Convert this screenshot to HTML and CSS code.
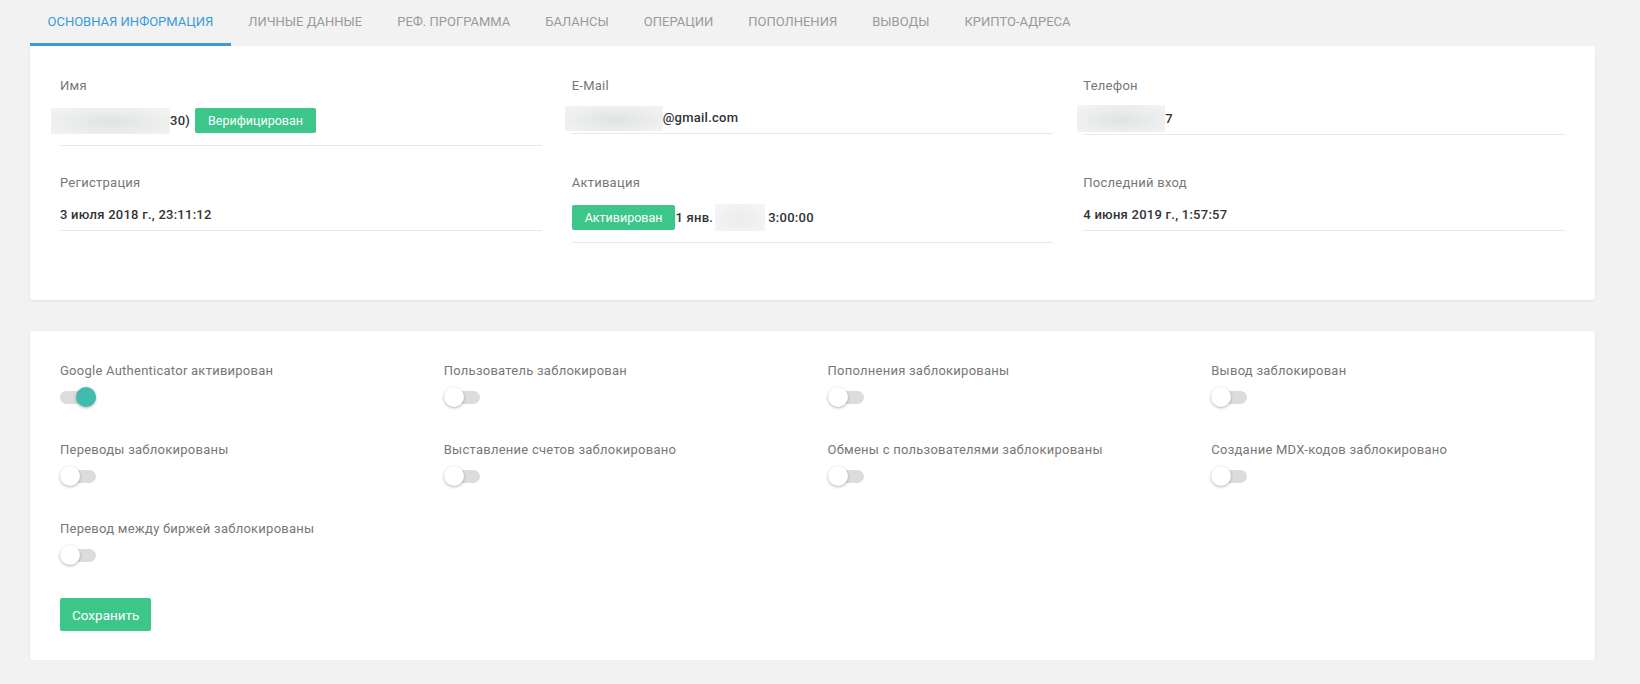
FILE: index.html
```
<!DOCTYPE html>
<html lang="ru">
<head>
<meta charset="utf-8">
<title>Пользователь</title>
<link rel="stylesheet" href="styles.css">
</head>
<body>
<nav class="tabs">
  <a class="tab tab--active">ОСНОВНАЯ ИНФОРМАЦИЯ</a>
  <a class="tab">ЛИЧНЫЕ ДАННЫЕ</a>
  <a class="tab">РЕФ. ПРОГРАММА</a>
  <a class="tab">БАЛАНСЫ</a>
  <a class="tab">ОПЕРАЦИИ</a>
  <a class="tab">ПОПОЛНЕНИЯ</a>
  <a class="tab">ВЫВОДЫ</a>
  <a class="tab">КРИПТО-АДРЕСА</a>
</nav>
<main class="page">
  <section class="card card--info">
    <div class="info-grid">
      <div class="field">
        <div class="field__label">Имя</div>
        <div class="field__value field__value--badge">
          <span class="blur blur--name"></span><span>30)</span><span class="badge badge--gap">Верифицирован</span>
        </div>
      </div>
      <div class="field">
        <div class="field__label">E-Mail</div>
        <div class="field__value">
          <span class="blur blur--mail"></span><span>@gmail.com</span>
        </div>
      </div>
      <div class="field">
        <div class="field__label">Телефон</div>
        <div class="field__value">
          <span class="blur blur--phone"></span><span>7</span>
        </div>
      </div>
      <div class="field">
        <div class="field__label">Регистрация</div>
        <div class="field__value"><span>3 июля 2018 г., 23:11:12</span></div>
      </div>
      <div class="field">
        <div class="field__label">Активация</div>
        <div class="field__value field__value--badge">
          <span class="badge">Активирован</span><span>1 янв.</span><span class="blur blur--year"></span><span>3:00:00</span>
        </div>
      </div>
      <div class="field">
        <div class="field__label">Последний вход</div>
        <div class="field__value"><span>4 июня 2019 г., 1:57:57</span></div>
      </div>
    </div>
  </section>

  <section class="card card--flags">
    <div class="flags-grid">
      <div class="flag">
        <div class="flag__label">Google Authenticator активирован</div>
        <span class="switch switch--on"><span class="switch__track"></span><span class="switch__knob"></span></span>
      </div>
      <div class="flag">
        <div class="flag__label">Пользователь заблокирован</div>
        <span class="switch"><span class="switch__track"></span><span class="switch__knob"></span></span>
      </div>
      <div class="flag">
        <div class="flag__label">Пополнения заблокированы</div>
        <span class="switch"><span class="switch__track"></span><span class="switch__knob"></span></span>
      </div>
      <div class="flag">
        <div class="flag__label">Вывод заблокирован</div>
        <span class="switch"><span class="switch__track"></span><span class="switch__knob"></span></span>
      </div>
      <div class="flag">
        <div class="flag__label">Переводы заблокированы</div>
        <span class="switch"><span class="switch__track"></span><span class="switch__knob"></span></span>
      </div>
      <div class="flag">
        <div class="flag__label">Выставление счетов заблокировано</div>
        <span class="switch"><span class="switch__track"></span><span class="switch__knob"></span></span>
      </div>
      <div class="flag">
        <div class="flag__label">Обмены с пользователями заблокированы</div>
        <span class="switch"><span class="switch__track"></span><span class="switch__knob"></span></span>
      </div>
      <div class="flag">
        <div class="flag__label">Создание MDX-кодов заблокировано</div>
        <span class="switch"><span class="switch__track"></span><span class="switch__knob"></span></span>
      </div>
      <div class="flag">
        <div class="flag__label">Перевод между биржей заблокированы</div>
        <span class="switch"><span class="switch__track"></span><span class="switch__knob"></span></span>
      </div>
    </div>
    <div class="actions">
      <button class="btn-save" type="button">Сохранить</button>
    </div>
  </section>
</main>
</body>
</html>
```

FILE: styles.css
```
* { box-sizing: border-box; }

body {
  margin: 0;
  background: #f2f2f2;
  font-family: Roboto, "Liberation Sans", sans-serif;
  color: #333;
}

.tabs {
  display: flex;
  height: 46px;
  padding-left: 30px;
}

.tab {
  display: block;
  padding: 0 17.5px;
  line-height: 44px;
  height: 46px;
  border-bottom: 3px solid transparent;
  font-size: 13px;
  color: #9a9a9a;
  white-space: nowrap;
}

.tab--active {
  color: #3a9ad9;
  border-bottom-color: #3a9ad9;
}

.page {
  padding: 0 45px 0 30px;
}

.card {
  background: #fff;
  border-radius: 3px;
  box-shadow: 0 1px 3px rgba(0, 0, 0, 0.08);
  padding: 30px 15px;
}

.card--flags {
  margin-top: 31px;
  padding-bottom: 29px;
}

.info-grid {
  display: grid;
  grid-template-columns: repeat(3, 1fr);
  align-items: start;
}

.field {
  padding: 0 15px;
  margin-bottom: 27px;
}

.field__label,
.flag__label {
  font-size: 13px;
  line-height: 20px;
  letter-spacing: 0.25px;
  color: #777;
}

.field__label {
  margin-bottom: 12px;
}

.field__value {
  display: flex;
  align-items: center;
  min-height: 20px;
  line-height: 20px;
  padding-bottom: 5px;
  border-bottom: 1px solid #e9e9e9;
  font-size: 13px;
  font-weight: 500;
  letter-spacing: 0.25px;
  color: #333;
  white-space: nowrap;
}

.field__value--badge {
  padding-bottom: 12px;
}

.badge {
  display: inline-block;
  height: 25px;
  line-height: 25px;
  padding: 0 13px;
  border-radius: 2px;
  background: #3cc68a;
  color: #fff;
  font-size: 12.5px;
  font-weight: 400;
  letter-spacing: 0;
}

.badge--gap {
  margin-left: 5px;
}

.blur {
  display: inline-block;
  margin: -3px 0;
  background: radial-gradient(ellipse at 50% 55%, #e1e2e3 0%, #eaebeb 45%, #f4f4f4 100%);
}

.blur--name {
  width: 119px;
  height: 26px;
  margin-left: -9px;
}

.blur--mail {
  width: 98px;
  height: 25px;
  margin-left: -7px;
}

.blur--phone {
  width: 88px;
  height: 27px;
  margin-left: -6px;
}

.blur--year {
  width: 50px;
  height: 27px;
  margin: -1px 3px -1px 2px;
  background: radial-gradient(ellipse at 50% 55%, #ececec 0%, #f1f1f1 55%, #f7f7f7 100%);
}

.flags-grid {
  display: grid;
  grid-template-columns: repeat(4, 1fr);
}

.flag {
  padding: 0 15px;
  margin-bottom: 33px;
}

.flag__label {
  margin-bottom: 6px;
}

.switch {
  position: relative;
  display: block;
  width: 36px;
  height: 20px;
}

.switch__track {
  position: absolute;
  left: 0;
  top: 4px;
  width: 36px;
  height: 13px;
  border-radius: 7px;
  background: #dcdcdc;
}

.switch__knob {
  position: absolute;
  left: 0;
  top: 0;
  width: 20px;
  height: 20px;
  border-radius: 50%;
  background: #fff;
  box-shadow: 0 1px 3px rgba(0, 0, 0, 0.3);
}

.switch--on .switch__knob {
  left: 16px;
  background: #40bcaf;
}

.actions {
  padding: 0 15px;
}

.btn-save {
  display: block;
  height: 33px;
  padding: 0 12px;
  border: 0;
  border-radius: 2px;
  background: #3cc68a;
  color: #fff;
  font-family: Roboto, "Liberation Sans", sans-serif;
  font-size: 13.5px;
}
```
